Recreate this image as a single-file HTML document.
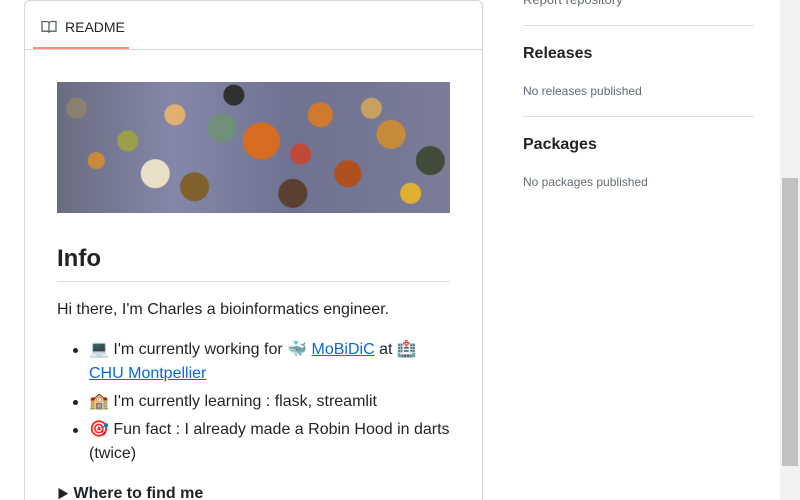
<!DOCTYPE html>
<html style="height:500px;overflow:hidden"><head><style>
body{margin:0;width:800px;height:500px;overflow:hidden;background:#fff;font-family:"Liberation Sans","Noto Sans CJK JP",sans-serif;color:#1f2328;position:relative}
.card{position:absolute;left:24px;top:0;width:457px;height:540px;border:1px solid #d0d7de;border-radius:6px}
.tab{position:absolute;left:0;top:0;width:457px;height:48px;border-bottom:1px solid #d0d7de}
.tabl{position:absolute;left:16px;top:18px;font-size:14px;display:flex;align-items:center;gap:8px}
.ul{position:absolute;left:8px;top:46px;width:96px;height:2px;background:#fd8c73}
.img{position:absolute;left:57px;top:82px;width:393px;height:131px;background:
radial-gradient(circle at 5% 20%,#8a8070 0 10px,transparent 11px),
radial-gradient(circle at 10% 60%,#c98a3a 0 8px,transparent 9px),
radial-gradient(circle at 25% 70%,#e9e0c8 0 14px,transparent 15px),
radial-gradient(circle at 18% 45%,#9aa04a 0 10px,transparent 11px),
radial-gradient(circle at 30% 25%,#e0b070 0 10px,transparent 11px),
radial-gradient(circle at 42% 35%,#6f8f7a 0 14px,transparent 15px),
radial-gradient(circle at 52% 45%,#d86b22 0 18px,transparent 19px),
radial-gradient(circle at 60% 85%,#5a4030 0 14px,transparent 15px),
radial-gradient(circle at 67% 25%,#d07a30 0 12px,transparent 13px),
radial-gradient(circle at 62% 55%,#c04a3a 0 10px,transparent 11px),
radial-gradient(circle at 74% 70%,#b0501f 0 13px,transparent 14px),
radial-gradient(circle at 80% 20%,#c8a060 0 10px,transparent 11px),
radial-gradient(circle at 85% 40%,#c88b3a 0 14px,transparent 15px),
radial-gradient(circle at 90% 85%,#e0b030 0 10px,transparent 11px),
radial-gradient(circle at 95% 60%,#3f4d3a 0 14px,transparent 15px),
radial-gradient(circle at 35% 80%,#80612d 0 14px,transparent 15px),
radial-gradient(circle at 45% 10%,#303030 0 10px,transparent 11px),
linear-gradient(90deg,#6a6c80,#8487a8 30%,#6f7290 60%,#7a7c98);}
h2{position:absolute;left:57px;top:244px;margin:0;font-size:24px;font-weight:600;width:393px;border-bottom:1px solid #d8dee4;padding-bottom:7px;line-height:30px}
.t{position:absolute;font-size:16px;line-height:24px}
a{color:#0969da;text-decoration:underline}
.dot{position:absolute;left:73px;width:5px;height:5px;border-radius:50%;background:#1f2328}
.r{position:absolute;left:523px}
.hr{position:absolute;left:523px;width:231px;height:1px;background:#d8dee4}
.rh{font-size:16px;font-weight:600}
.rs{font-size:12px;color:#636c76}
.sb{position:absolute;left:780px;top:0;width:20px;height:500px;background:#f1f1f1}
.th{position:absolute;left:782px;top:178px;width:16px;height:288px;background:#c1c1c1}
</style></head><body>
<div class="card"><div class="tab"><div class="tabl"><svg width="16" height="16" viewBox="0 0 16 16" fill="none" stroke="#57606a" stroke-width="1.3"><path d="M1 2.5h4.5c1.4 0 2.5 1 2.5 2.3v9c0-1-.9-1.6-2-1.6H1z M15 2.5h-4.5C9.1 2.5 8 3.5 8 4.8v9c0-1 .9-1.6 2-1.6H15z"/></svg><span>README</span></div><div class="ul"></div></div></div>
<div class="img"></div>
<h2>Info</h2>
<div class="t" style="left:57px;top:298px">Hi there, I'm Charles a bioinformatics engineer.</div>
<div class="dot" style="top:348px"></div>
<div class="t" style="left:89px;top:338px">💻 I'm currently working for 🐳 <a>MoBiDiC</a> at 🏥<br><a>CHU Montpellier</a></div>
<div class="dot" style="top:400px"></div>
<div class="t" style="left:89px;top:390px">🏫 I'm currently learning : flask, streamlit</div>
<div class="dot" style="top:428px"></div>
<div class="t" style="left:89px;top:418px">🎯 Fun fact : I already made a Robin Hood in darts<br>(twice)</div>
<div class="t" style="left:57px;top:482px;font-weight:600"><span style="font-size:12px">▶</span> Where to find me</div>
<div class="r rs" style="top:-8px;font-size:13px">Report repository</div>
<div class="hr" style="top:25px"></div>
<div class="r rh" style="top:45px">Releases</div>
<div class="r rs" style="top:84px">No releases published</div>
<div class="hr" style="top:116px"></div>
<div class="r rh" style="top:136px">Packages</div>
<div class="r rs" style="top:175px">No packages published</div>
<div class="sb"></div><div class="th"></div>
</body></html>
